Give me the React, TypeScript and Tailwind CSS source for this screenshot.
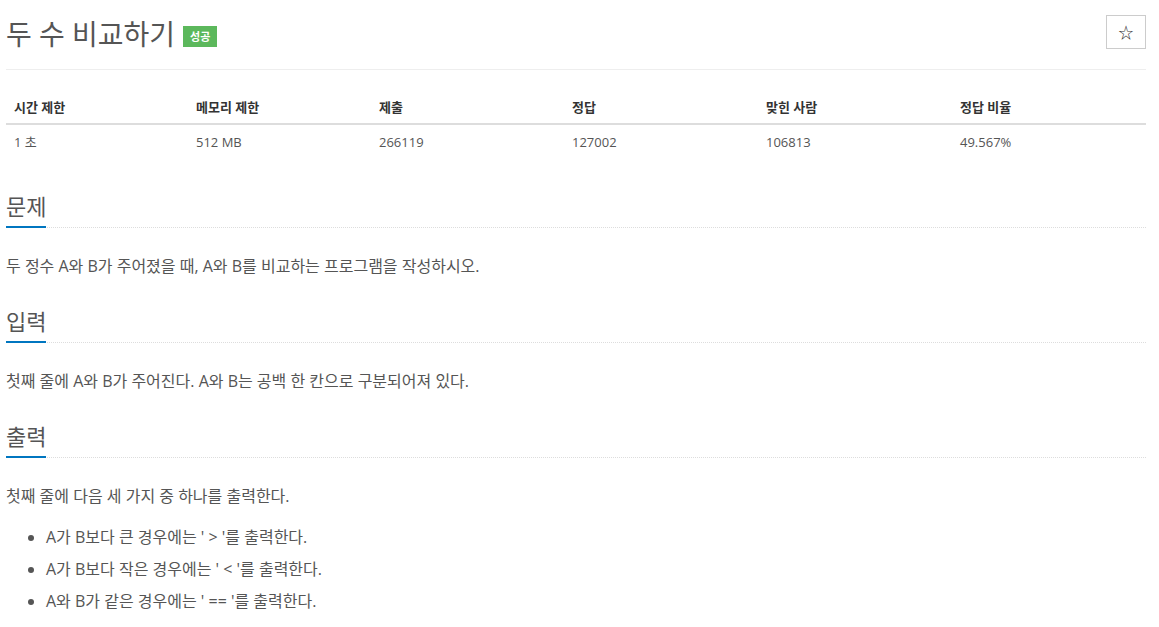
const font = 'font-["Open_Sans","Noto_Sans_CJK_KR",sans-serif]';

const stats = [
  { label: '시간 제한', value: '1 초', w: 'w-[182px]' },
  { label: '메모리 제한', value: '512 MB', w: 'w-[183px]' },
  { label: '제출', value: '266119', w: 'w-[193px]' },
  { label: '정답', value: '127002', w: 'w-[194px]' },
  { label: '맞힌 사람', value: '106813', w: 'w-[194px]' },
  { label: '정답 비율', value: '49.567%', w: '' },
];

function Section({ title, children }: { title: string; children: React.ReactNode }) {
  return (
    <section className="mt-[12px] first:mt-0">
      <div className="relative border-b border-dotted border-[#ddd] h-[53px] flex items-end pb-[10px]">
        <h2 className="text-[22px] leading-[22px] text-[#555] font-normal">{title}</h2>
        <span className="absolute left-0 -bottom-[1px] h-[2px] w-[40px] bg-[#0076c0]" />
      </div>
      {children}
    </section>
  );
}

export default function App() {
  return (
    <div className={`${font} bg-white min-h-[627px] px-[6px] pt-[15px] text-[#333] w-[1140px] box-content`}>
      <div className="flex items-start justify-between border-b border-[#eee] h-[55px]">
        <div className="flex items-center gap-[8px] pt-[1px]">
          <h1 className="text-[28px] leading-[36px] text-[#555] font-normal">두 수 비교하기</h1>
          <span className="mt-[5px] bg-[#5cb85c] text-white text-[11px] font-bold leading-none px-[7px] py-[5px]">
            성공
          </span>
        </div>
        <button className="w-[40px] h-[34px] border border-[#ccc] bg-white flex items-center justify-center text-[15px] text-[#333]">
          ☆
        </button>
      </div>

      <table className="w-full text-[13px] mt-[23px] border-collapse">
        <thead>
          <tr className="border-b-2 border-[#ddd]">
            {stats.map((s) => (
              <th key={s.label} className={`${s.w} text-left font-bold px-[8px] pb-[5px] pt-[3px] leading-[22px]`}>
                {s.label}
              </th>
            ))}
          </tr>
        </thead>
        <tbody>
          <tr>
            {stats.map((s) => (
              <td key={s.label} className="px-[8px] py-[6px] leading-[22px] text-[#555]">
                {s.value}
              </td>
            ))}
          </tr>
        </tbody>
      </table>

      <div className="text-[16px] text-[#555] leading-[24px] mt-[16px]">
        <Section title="문제">
          <p className="mt-[26px]">두 정수 A와 B가 주어졌을 때, A와 B를 비교하는 프로그램을 작성하시오.</p>
        </Section>
        <Section title="입력">
          <p className="mt-[26px]">첫째 줄에 A와 B가 주어진다. A와 B는 공백 한 칸으로 구분되어져 있다.</p>
        </Section>
        <Section title="출력">
          <p className="mt-[26px]">첫째 줄에 다음 세 가지 중 하나를 출력한다.</p>
          <ul className="list-disc pl-[40px] mt-[17px] space-y-[8px]">
            <li>A가 B보다 큰 경우에는 ' &gt; '를 출력한다.</li>
            <li>A가 B보다 작은 경우에는 ' &lt; '를 출력한다.</li>
            <li>A와 B가 같은 경우에는 ' == '를 출력한다.</li>
          </ul>
        </Section>
      </div>
    </div>
  );
}
